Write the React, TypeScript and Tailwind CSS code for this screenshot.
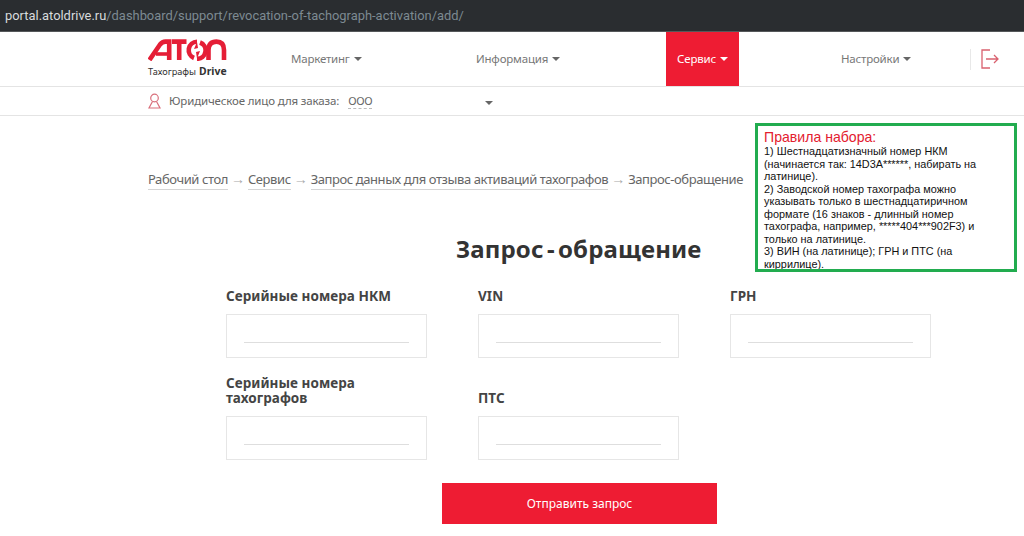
function Caret({ className = "border-t-[#666]" }: { className?: string }) {
  return <span className={`ml-[4px] inline-block w-0 h-0 border-l-[4px] border-r-[4px] border-t-[4px] border-l-transparent border-r-transparent ${className}`} />;
}

function Logo() {
  return (
    <div className="w-[78px] flex flex-col">
      <svg width="79" height="22" viewBox="0 0 79 22" className="block">
        <g fill="none" stroke="#e51e36" strokeWidth="4.6">
          <path d="M1.5 21 L12 5.5 Q14.2 2.6 17.5 2.6 L21.2 2.6 L21.2 21" />
          <path d="M8 15 H20" strokeWidth="3.6" />
          <path d="M24 2.6 H38.5 M31.2 2.6 V21" />
          <path d="M52 3.5 A8.4 8.4 0 0 1 49 19.8" />
          <path d="M46 19 A8.4 8.4 0 0 1 49 2.8" />
          <path d="M60.5 21 L60.5 11 Q60.5 2.6 68.5 2.6 Q76 2.6 76 11 L76 21" />
        </g>
        <path d="M49 3 L46 10 L50 9 Z M49 19.5 L52 12 L48 13 Z" fill="#e51e36" />
      </svg>
      <div className="mt-[3px] h-[18px] flex items-baseline whitespace-nowrap text-[#333]">
        <span className="text-[9.2px]">Тахографы</span>
        <span className="ml-[3px] text-[10.4px] font-bold">Drive</span>
      </div>
    </div>
  );
}

function Field({ label }: { label: React.ReactNode }) {
  return (
    <div className="w-[201px] flex flex-col">
      <div className="h-[35px] flex items-end pb-[10px] text-[13.5px] leading-[15px] font-bold tracking-[0.05px] text-[#444]">{label}</div>
      <div className="h-[44px] border border-[#e6e6e6] px-[17px] pt-[27px]">
        <div className="h-px bg-[#dedede]" />
      </div>
    </div>
  );
}

function Crumb({ children }: { children: React.ReactNode }) {
  return <a className="border-b border-[#d5d5d5] leading-[17px] pb-px">{children}</a>;
}

function Arrow() {
  return <span className="mx-[3px] w-[14px] text-center text-[#aaa] text-[14px] leading-[17px] tracking-normal" style={{ fontFamily: "'Liberation Sans', sans-serif" }}>→</span>;
}

export default function App() {
  return (
    <div className="relative w-[1024px] h-[536px] overflow-hidden bg-white" style={{ fontFamily: "'Noto Sans', sans-serif" }}>
      <div className="h-[32px] bg-[#2a2d30] border-b border-[#55585a] pl-[5px] flex items-center text-[12.9px] text-[#7d8a92]" style={{ fontFamily: "Roboto, sans-serif" }}>
        <span className="text-[#d8dbdd]">portal.atoldrive.ru</span>/dashboard/support/revocation-of-tachograph-activation/add/
      </div>

      <nav className="h-[55px] border-b border-[#e4e4e4] pl-[148px] flex items-stretch text-[11.5px] tracking-[-0.2px] text-[#777]">
        <div className="pt-[7px] tracking-normal"><Logo /></div>
        <a className="ml-[65px] w-[70px] flex items-center whitespace-nowrap">Маркетинг<Caret /></a>
        <a className="ml-[115px] w-[85px] flex items-center whitespace-nowrap">Информация<Caret /></a>
        <a className="ml-[105px] w-[73px] bg-[#ee1c33] text-white flex items-center justify-center whitespace-nowrap">Сервис<Caret className="border-t-white" /></a>
        <a className="ml-[102px] w-[70px] flex items-center whitespace-nowrap">Настройки<Caret /></a>
        <div className="ml-[59px] self-center h-[21px] w-px bg-[#e8e8e8]" />
        <div className="ml-[10px] self-center">
          <svg width="18" height="20" viewBox="0 0 18 20" fill="none" stroke="#d9616f" strokeWidth="1.3" className="block">
            <path d="M9 1 H1 V19 H9" />
            <path d="M5 10 H17 M13 6 L17 10 L13 14" />
          </svg>
        </div>
      </nav>

      <div className="h-[29px] border-b border-[#e4e4e4] pl-[148px] flex items-center text-[11.5px] tracking-[-0.15px] text-[#666]">
        <svg width="13" height="16" viewBox="0 0 13 16" fill="none" stroke="#d9707c" strokeWidth="1.2" className="block">
          <circle cx="6.5" cy="5" r="3.8" />
          <path d="M4.5 8.5 L1 15 H12 L8.5 8.5" />
        </svg>
        <span className="ml-[8px] whitespace-nowrap">Юридическое лицо для заказа:</span>
        <span className="ml-[9px] border-b border-dashed border-[#bbb] leading-[15px] text-[11px] tracking-[-0.3px]">ООО</span>
        <span className="ml-[109px]"><Caret /></span>
      </div>

      <div className="pl-[148px] pt-[55px] h-[35px] box-content flex items-start text-[13px] text-[#666] whitespace-nowrap tracking-[-0.42px]">
        <Crumb>Рабочий стол</Crumb><Arrow />
        <Crumb>Сервис</Crumb><Arrow />
        <Crumb>Запрос данных для отзыва активаций тахографов</Crumb><Arrow />
        <span className="leading-[17px]">Запрос-обращение</span>
      </div>

      <h1 className="mt-[27px] ml-[456px] text-[24px] leading-[32px] font-bold text-[#333] tracking-[0.12px] [word-spacing:-3px] whitespace-nowrap">Запрос - обращение</h1>

      <div className="mt-[14px] ml-[226px] w-[705px] grid grid-cols-[201px_201px_201px] gap-x-[51px] gap-y-[23px]">
        <Field label="Серийные номера НКМ" />
        <Field label="VIN" />
        <Field label="ГРН" />
        <Field label={<>Серийные номера<br />тахографов</>} />
        <Field label="ПТС" />
      </div>

      <button className="block mt-[23px] ml-[442px] w-[275px] h-[41px] bg-[#ee1c33] text-white text-[12px]">Отправить запрос</button>

      <aside className="absolute left-[755px] top-[123px] w-[262px] h-[149px] border-[3px] border-[#22ac4f] bg-white pl-[6px] pt-[4px] text-[#111] text-[10.87px] leading-[12.55px] overflow-hidden" style={{ fontFamily: "'Liberation Sans', sans-serif" }}>
        <div className="text-[#e3202f] text-[14.1px] leading-[15px]">Правила набора:</div>
        <div>1) Шестнадцатизначный номер НКМ</div>
        <div>(начинается так: 14D3A******, набирать на</div>
        <div>латинице).</div>
        <div>2) Заводской номер тахографа можно</div>
        <div>указывать только в шестнадцатиричном</div>
        <div>формате (16 знаков - длинный номер</div>
        <div>тахографа, например, *****404***902F3) и</div>
        <div>только на латинице.</div>
        <div>3) ВИН (на латинице); ГРН и ПТС (на</div>
        <div>киррилице).</div>
      </aside>
    </div>
  );
}
